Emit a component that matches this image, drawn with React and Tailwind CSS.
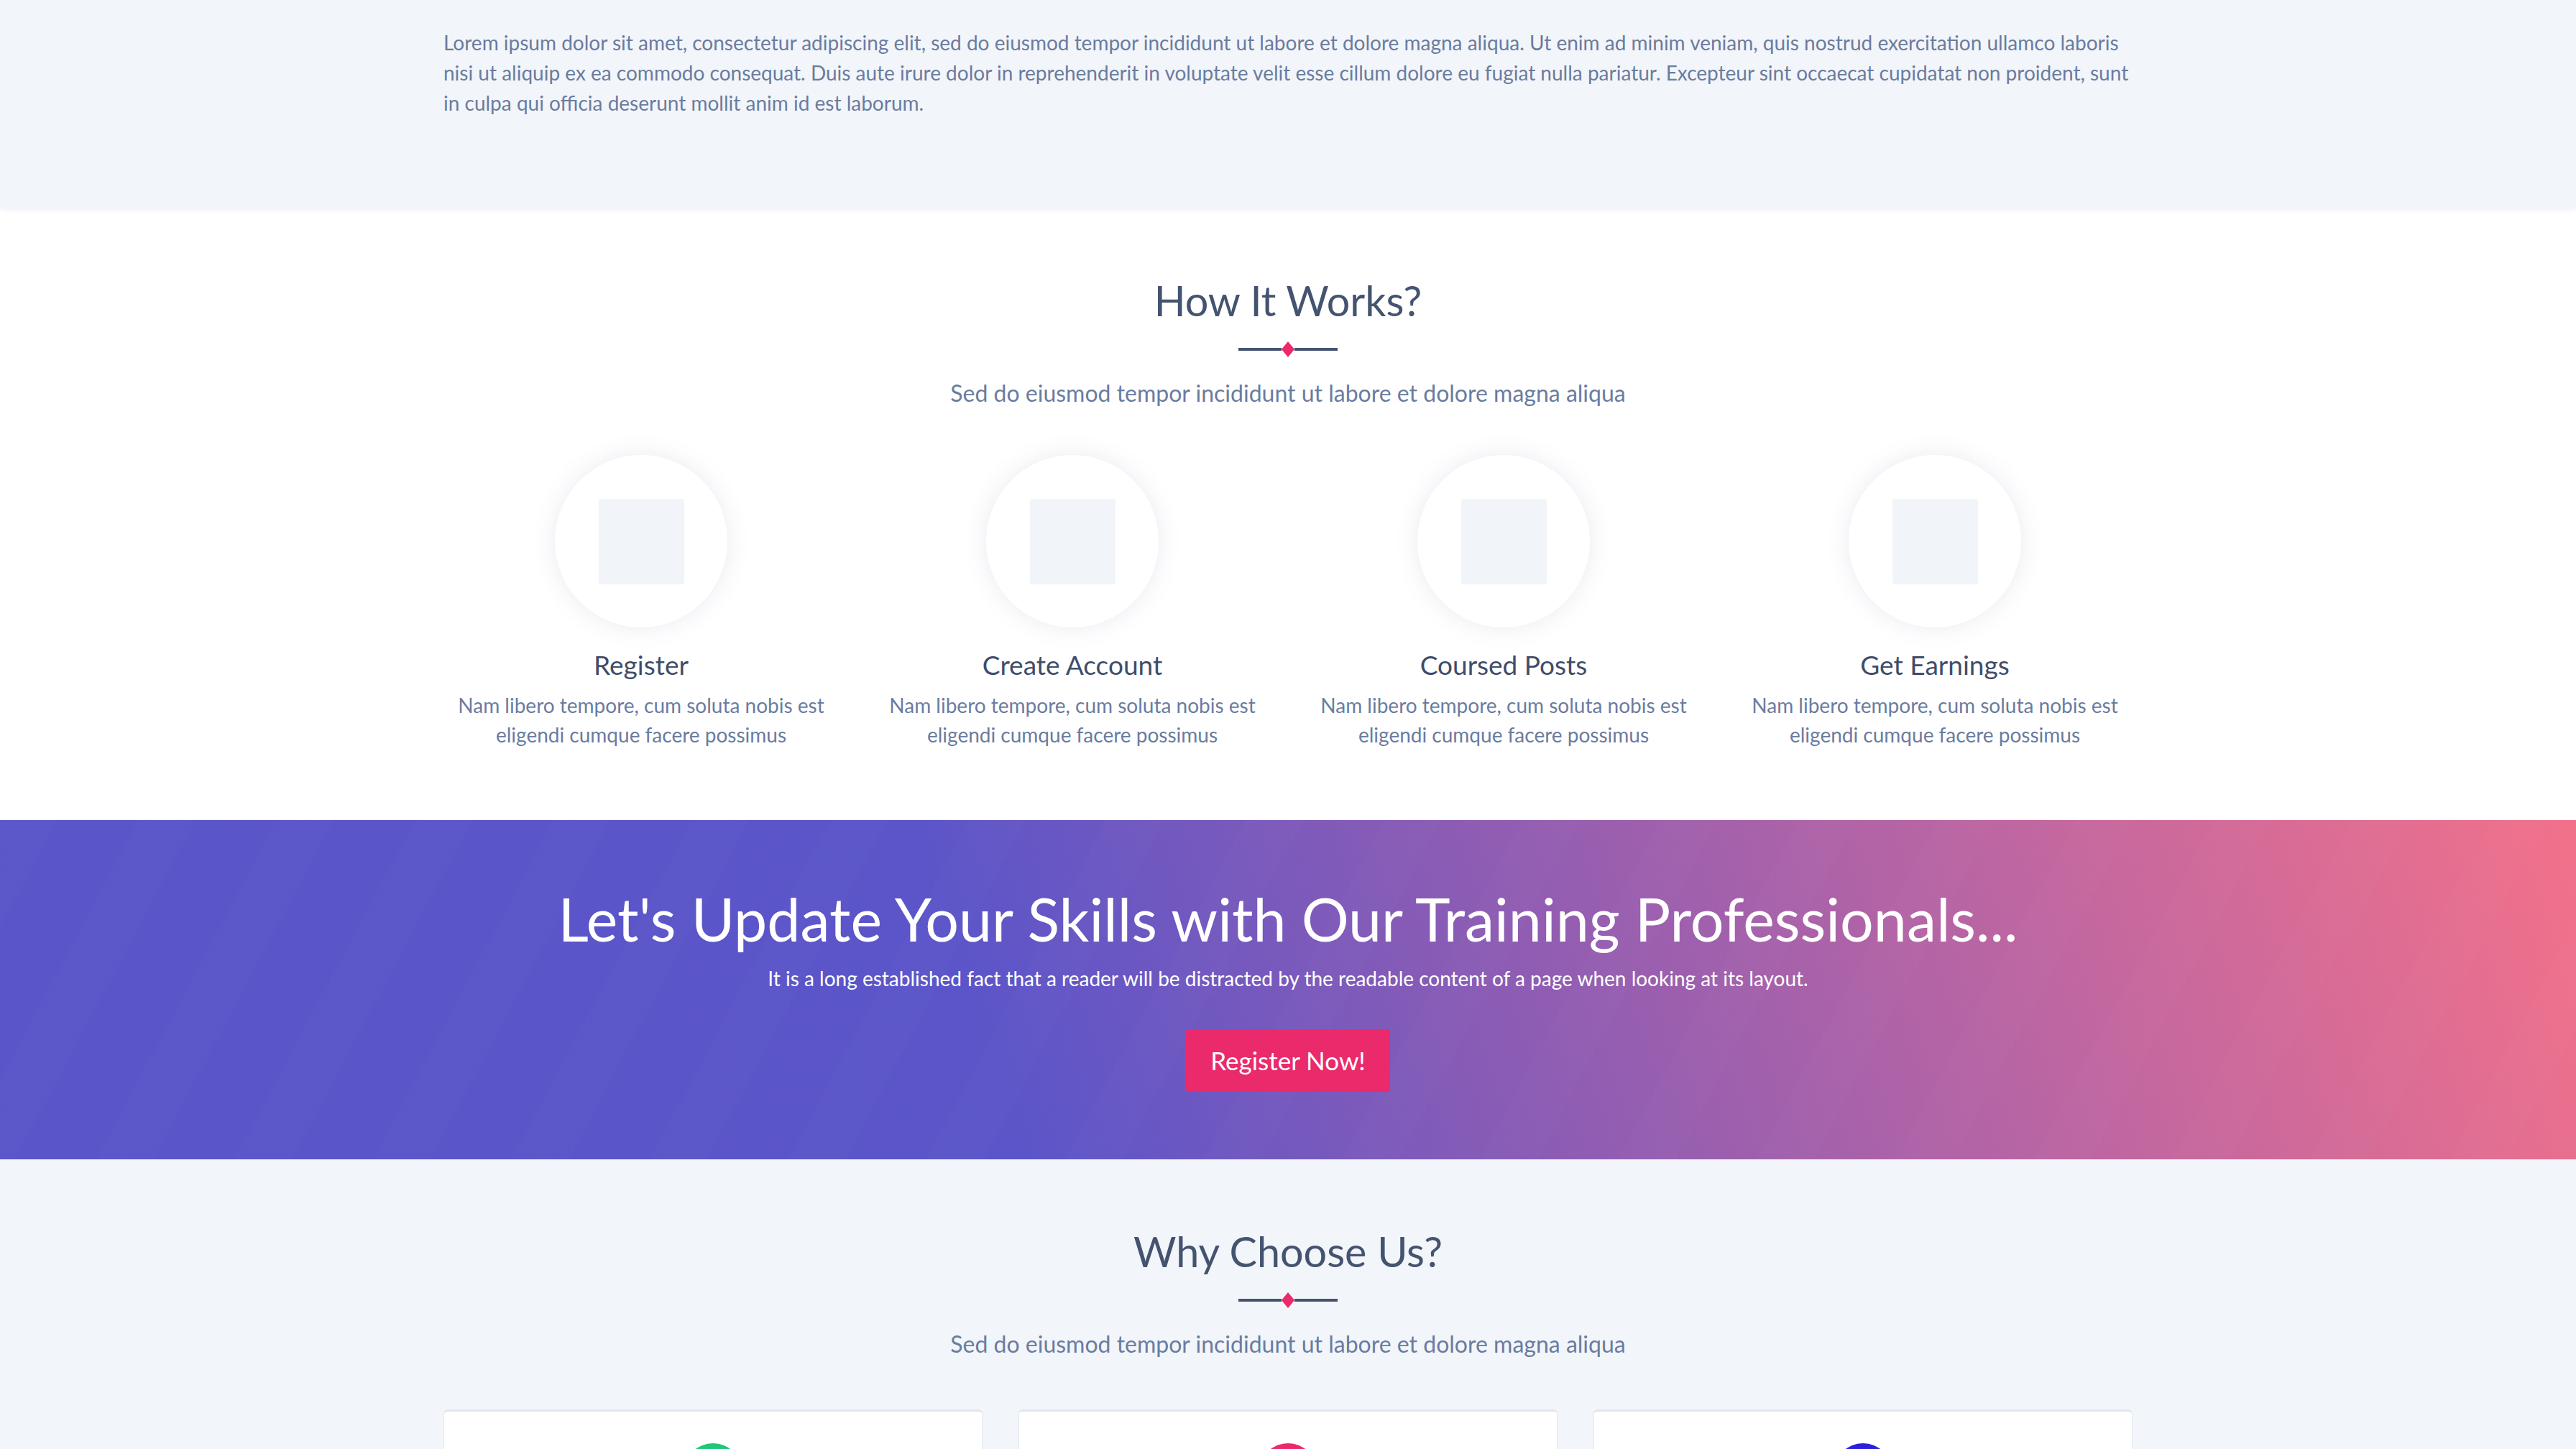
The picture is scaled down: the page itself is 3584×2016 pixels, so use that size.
const steps = [
  { title: "Register" },
  { title: "Create Account" },
  { title: "Coursed Posts" },
  { title: "Get Earnings" }
];

const reasons = [
  { title: "Expert Instructors", color: "bg-[#1fc77a]" },
  { title: "Flexible Learning", color: "bg-[#ea2a6b]" },
  { title: "Lifetime Access", color: "bg-[#2d1fdc]" }
];

function Divider() {
  return (
    <div className="mx-auto flex h-[22px] w-[138px] items-center">
      <div className="h-[4px] flex-1 bg-[#44536f]" />
      <svg width="18" height="22" viewBox="0 0 18 22" className="shrink-0">
        <polygon points="9,0 18,11 9,22 0,11" fill="#ea2a6b" />
      </svg>
      <div className="h-[4px] flex-1 bg-[#44536f]" />
    </div>
  );
}

function SectionHead({ title }) {
  return (
    <div className="text-center">
      <h2 className="text-[57.5px] leading-[66px] text-[#44536f]">{title}</h2>
      <div className="mt-[24px]">
        <Divider />
      </div>
      <p className="mt-[27px] text-[32px] leading-[46px] text-[#6a7ca0]">
        Sed do eiusmod tempor incididunt ut labore et dolore magna aliqua
      </p>
    </div>
  );
}

export default function App() {
  return (
    <div className="min-h-screen bg-white font-['Lato','Noto_Sans',sans-serif]">
      {/* intro text */}
      <section className="relative z-10 bg-[#f2f5f9] pt-[38px] pb-[126px] shadow-[0_2px_6px_rgba(150,120,190,0.12)]">
        <div className="mx-auto w-[2350px]">
          <p className="text-[28px] leading-[42px] text-[#6a7ca0]">
            Lorem ipsum dolor sit amet, consectetur adipiscing elit, sed do eiusmod tempor incididunt ut labore et dolore
            magna aliqua. Ut enim ad minim veniam, quis nostrud exercitation ullamco laboris nisi ut aliquip ex ea commodo
            consequat. Duis aute irure dolor in reprehenderit in voluptate velit esse cillum dolore eu fugiat nulla
            pariatur. Excepteur sint occaecat cupidatat non proident, sunt in culpa qui officia deserunt mollit anim id est
            laborum.
          </p>
        </div>
      </section>

      {/* how it works */}
      <section className="bg-white pt-[95px] pb-[98px]">
        <SectionHead title="How It Works?" />
        <div className="mx-auto mt-[63px] grid w-[2400px] grid-cols-4">
          {steps.map((step) => (
            <div key={step.title} className="px-[25px] text-center">
              <div className="mx-auto flex h-[240px] w-[240px] items-center justify-center rounded-full bg-white shadow-[0_0_32px_rgba(90,100,150,0.13)]">
                <div className="h-[119px] w-[119px] rounded-[4px] bg-[#f1f4f8]" />
              </div>
              <h3 className="mt-[28px] text-[37px] leading-[48px] text-[#3f4d6a]">{step.title}</h3>
              <p className="mx-auto mt-[12px] w-[530px] text-[28px] leading-[41px] text-[#6a7ca0]">
                Nam libero tempore, cum soluta nobis est eligendi cumque facere possimus
              </p>
            </div>
          ))}
        </div>
      </section>

      {/* call to action */}
      <section className="bg-[linear-gradient(72deg,#5a55c9_0%,#5b55c9_38%,#8c5cb4_58%,#c267a0_80%,#f2718a_100%)]">
        <div className="bg-[repeating-linear-gradient(118deg,rgba(255,255,255,0.012)_0px,rgba(255,255,255,0.012)_70px,rgba(255,255,255,0)_70px,rgba(255,255,255,0)_170px)] pt-[94px] pb-[94px] text-center">
          <h2 className="text-[82.5px] leading-[88px] text-white">
            Let's Update Your Skills with Our Training Professionals...
          </h2>
          <p className="mt-[18px] text-[28px] leading-[40px] text-white">
            It is a long established fact that a reader will be distracted by the readable content of a page when looking
            at its layout.
          </p>
          <button className="mt-[51px] h-[87px] w-[284px] rounded-[4px] bg-[#ea2a6b] text-[35px] text-white">
            Register Now!
          </button>
        </div>
      </section>

      {/* why choose us */}
      <section className="bg-[#f2f5f9] pt-[95px] pb-[120px]">
        <SectionHead title="Why Choose Us?" />
        <div className="mx-auto mt-[68px] grid w-[2400px] grid-cols-3">
          {reasons.map((item) => (
            <div key={item.title} className="px-[25px]">
              <div className="rounded-[6px] border border-[#e4e7f0] border-t-[3px] border-t-[#e2e4f0] bg-white px-[40px] pt-[44px] pb-[60px] text-center">
                <div className={`mx-auto h-[80px] w-[80px] rounded-full ${item.color}`} />
                <h3 className="mt-[30px] text-[37px] leading-[48px] text-[#3f4d6a]">{item.title}</h3>
                <p className="mt-[12px] text-[28px] leading-[41px] text-[#6a7ca0]">
                  Nam libero tempore, cum soluta nobis est eligendi cumque facere possimus
                </p>
              </div>
            </div>
          ))}
        </div>
      </section>
    </div>
  );
}
